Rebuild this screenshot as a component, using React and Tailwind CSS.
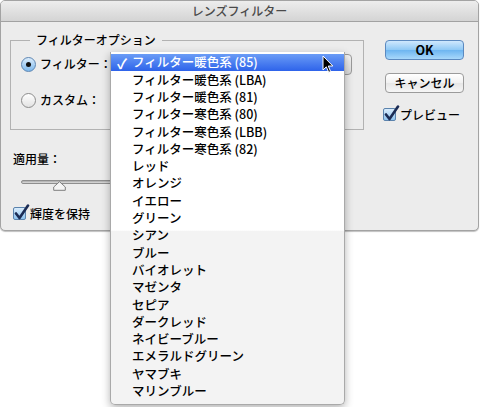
import React from "react";

const items = [
  "フィルター暖色系 (85)",
  "フィルター暖色系 (LBA)",
  "フィルター暖色系 (81)",
  "フィルター寒色系 (80)",
  "フィルター寒色系 (LBB)",
  "フィルター寒色系 (82)",
  "レッド",
  "オレンジ",
  "イエロー",
  "グリーン",
  "シアン",
  "ブルー",
  "バイオレット",
  "マゼンタ",
  "セピア",
  "ダークレッド",
  "ネイビーブルー",
  "エメラルドグリーン",
  "ヤマブキ",
  "マリンブルー",
];

function CheckBox() {
  return (
    <span className="relative inline-block w-[13px] h-[13px] rounded-[2px] border border-[#5b83ad] bg-[linear-gradient(#d9ecfc,#8ec3ef)] shrink-0">
      <svg className="absolute left-[0px] top-[-4px]" width="16" height="17" viewBox="0 0 16 17">
        <path d="M2 9.5 L5.5 14 L14 1.5" fill="none" stroke="#1b2c55" strokeWidth="2.6" strokeLinecap="round" strokeLinejoin="round" />
      </svg>
    </span>
  );
}

function Radio({ on }) {
  return on ? (
    <span className="flex items-center justify-center w-[15px] h-[15px] rounded-full border border-[#5d86b3] bg-[linear-gradient(#dcedfc,#7db8ec)] shrink-0">
      <span className="w-[5px] h-[5px] rounded-full bg-[#111]" />
    </span>
  ) : (
    <span className="w-[15px] h-[15px] rounded-full border border-[#8c8c8c] bg-[linear-gradient(#ffffff,#e2e2e2)] shrink-0" />
  );
}

export default function App() {
  return (
    <div className="relative w-[480px] h-[407px] bg-white overflow-hidden font-['Noto_Sans_CJK_JP','Noto_Sans',sans-serif] font-medium text-[12px] text-black leading-none">
      {/* window */}
      <div className="w-[479px] h-[231px] rounded-[5px] border border-[#a3a3a3] bg-[#ececec] shadow-[0_1px_1px_rgba(0,0,0,0.25)] overflow-hidden">
        <div className="h-[21px] border-b border-[#a2a2a2] bg-[linear-gradient(#ededed,#d4d4d4)] flex items-center justify-center text-[#4a4a4a] text-[12px]">
          レンズフィルター
        </div>
        <div className="flex">
          <div className="flex flex-col">
            <fieldset className="ml-[9px] mt-[11px] w-[354px] h-[97px] border border-[#b2b2b2] px-[10px]">
              <legend className="ml-[9px] px-[6px] text-[12px] leading-[14px]">フィルターオプション</legend>
              <div className="flex items-center h-[22px] mt-[6px]">
                <Radio on />
                <span className="ml-[4px] w-[70px] shrink-0 whitespace-nowrap">フィルター：</span>
                <div className="w-[242px] h-[21px] shrink-0 rounded-[4px] border border-[#9a9a9a] bg-[linear-gradient(#f6f6f6,#dadada)]" />
              </div>
              <div className="flex items-center h-[32px] mt-[9px]">
                <Radio />
                <span className="ml-[4px] w-[70px] shrink-0 whitespace-nowrap">カスタム：</span>
                <div className="w-[60px] h-[32px] bg-[#e0902f]" />
              </div>
            </fieldset>
            <div className="ml-[12px] mt-[23px]">適用量：</div>
            <div className="relative ml-[20px] mt-[14px] w-[100px] h-[12px]">
              <div className="absolute left-0 top-[1px] w-[100px] h-[4px] rounded-full border border-[#8e8e8e] bg-[linear-gradient(#a9a9a9,#dedede)]" />
              <svg className="absolute left-[32px] top-[2px]" width="13" height="10" viewBox="0 0 13 10">
                <path d="M6.5 0.7 L12.3 6 L12.3 9.3 L0.7 9.3 L0.7 6 Z" fill="#f4f4f4" stroke="#7e7e7e" strokeWidth="1" />
              </svg>
            </div>
            <div className="flex items-center ml-[12px] mt-[16px]">
              <CheckBox />
              <span className="ml-[4px]">輝度を保持</span>
            </div>
          </div>
          <div className="flex flex-col ml-[21px] mt-[18px]">
            <div className="w-[79px] h-[20px] rounded-[4px] border border-[#5b89bf] bg-[linear-gradient(#cfe8fd,#8ec8f5_50%,#6db5f0_51%,#a8d8fb)] flex items-center justify-center text-[12.5px] font-semibold">
              OK
            </div>
            <div className="mt-[13px] w-[79px] h-[20px] rounded-[4px] border border-[#9b9b9b] bg-[linear-gradient(#ffffff,#f1f1f1_50%,#e6e6e6_51%,#f6f6f6)] flex items-center justify-center">
              キャンセル
            </div>
            <div className="flex items-center mt-[15px] -ml-[2px]">
              <CheckBox />
              <span className="ml-[4px]">プレビュー</span>
            </div>
          </div>
        </div>
      </div>

      {/* popup menu */}
      <div className="absolute left-[110px] top-[52px] w-[235px] h-[353px] rounded-b-[5px] border border-[#a9a9a9] border-t-0 bg-[linear-gradient(#ffffff_0%,#ffffff_50.6%,#f3f3f3_51%,#f3f3f3_100%)] shadow-[0_3px_8px_rgba(0,0,0,0.3)] pt-[2px] text-[12.5px]">
        {items.map((t, i) => (
          <div
            key={t}
            className={
              i === 0
                ? "relative h-[17.3px] flex items-center pl-[21px] text-white bg-[linear-gradient(#6a9cf6,#2e63ea)]"
                : "h-[17.3px] flex items-center pl-[21px]"
            }
          >
            {i === 0 && <span className="absolute left-[6px] text-[14px] font-bold">✓</span>}
            {t}
          </div>
        ))}
      </div>

      {/* cursor */}
      <svg className="absolute left-[322px] top-[55px]" width="12" height="19" viewBox="0 0 12 19">
        <path d="M1 1 L1 15 L4.3 11.8 L6.7 17.3 L8.6 16.5 L6.3 11 L10.8 11 Z" fill="#000" stroke="#fff" strokeWidth="1" strokeLinejoin="round" />
      </svg>
    </div>
  );
}
